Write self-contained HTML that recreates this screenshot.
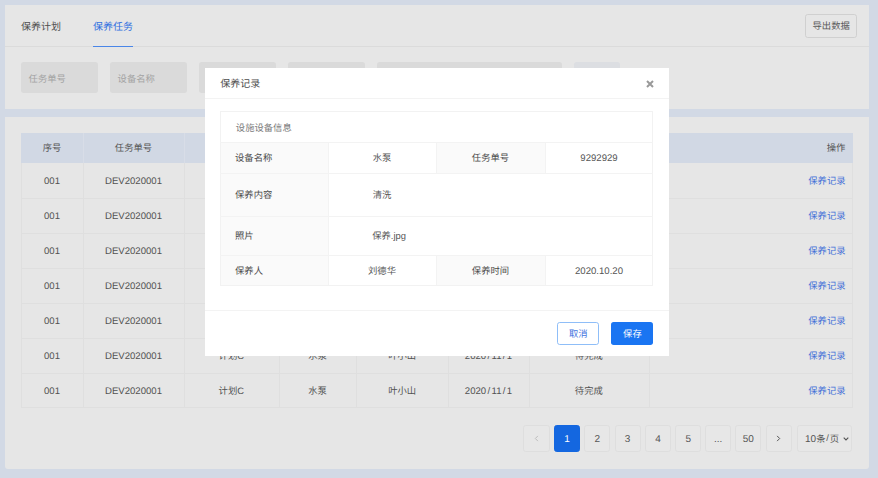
<!DOCTYPE html>
<html lang="zh-CN">
<head>
<meta charset="utf-8">
<title>保养任务</title>
<style>
*{box-sizing:border-box;margin:0;padding:0}
html,body{width:878px;height:478px;overflow:hidden}
body{background:#d2d9e5;font-family:"Liberation Sans","Noto Sans CJK SC",sans-serif;font-size:9.33px;color:#525252;position:relative;text-rendering:geometricPrecision}
.abs{position:absolute}
.c{display:flex;align-items:center;justify-content:center;white-space:nowrap;padding-bottom:2px}
.l{display:flex;align-items:center;justify-content:flex-start;white-space:nowrap;padding-bottom:2px}
.r{display:flex;align-items:center;justify-content:flex-end;white-space:nowrap;padding-bottom:2px}
.panel{position:absolute;background:#e6e6e6}
#p1{left:5px;top:5px;width:863.8px;height:103.7px}
#p2{left:5px;top:116.5px;width:863.8px;height:352px;border-radius:0 0 3px 3px}
.tab{position:absolute;top:16px;height:20px;font-size:10px}
.tabline{position:absolute;left:5px;top:46px;width:863.8px;height:1px;background:#dbdbdb}
.inp{position:absolute;top:62.2px;height:30.7px;background:#dadada;border-radius:2.7px;color:#a3a3a3;padding-left:7.6px;padding-bottom:0}
.th{position:absolute;top:132.5px;height:30.5px;background:#d1d8e4;color:#555}
.vline{position:absolute;width:1px;background:#dfdfdf;top:132.5px;height:275px}
.hline{position:absolute;left:21px;width:831.6px;height:1px;background:#dfdfdf}
.td{position:absolute;height:35px;color:#525252}
.lnk{color:#3f6fd8}
.en{font-size:9.6px;padding-bottom:0;padding-top:1px}
.pg{position:absolute;top:425px;height:26.6px;width:26.3px;border:1px solid #dedede;border-radius:2.7px;background:#e7e7e7;color:#555;font-size:10px;padding-bottom:0;padding-top:2.8px}
#modal{position:absolute;left:205px;top:68px;width:463.8px;height:288px;background:#fff}
.ml{position:absolute;background:#f3f3f3}
.lab{position:absolute;background:#fafafa;color:#4a4a4a}
.val{position:absolute;color:#555}
.btn{position:absolute;top:253.6px;height:23.4px;width:42px;border-radius:2.7px;padding-bottom:0}
</style>
</head>
<body>
<div class="panel" id="p1"></div>
<div class="panel" id="p2"></div>
<div class="tab l" style="left:21px;color:#4d4d4d">保养计划</div>
<div class="tab l" style="left:93px;color:#2f6fe0">保养任务</div>
<div class="tabline"></div>
<div class="abs" style="left:93px;top:45.6px;width:40px;height:1.4px;background:#4a86e8"></div>
<div class="abs c" style="left:805px;top:14px;width:52.3px;height:23.6px;border:1px solid #d0d0d0;border-radius:2.7px;color:#5a5a5a">导出数据</div>
<div class="inp l" style="left:21px;width:77.2px">任务单号</div>
<div class="inp l" style="left:110px;width:77.2px">设备名称</div>
<div class="inp l" style="left:199px;width:77.2px">保养计划</div>
<div class="inp l" style="left:288px;width:77.2px">状态</div>
<div class="inp l" style="left:376.7px;width:185.4px">开始日期</div>
<div class="abs c" style="left:574.3px;top:62.2px;width:46px;height:30.7px;background:#dcdee2;border-radius:2.7px;color:#fff">查询</div>
<div class="th" style="left:21px;width:831.6px"></div>
<div class="th c" style="left:21px;width:62.0px">序号</div>
<div class="th c" style="left:83px;width:101.0px">任务单号</div>
<div class="th c" style="left:184px;width:94.6px">保养计划</div>
<div class="th c" style="left:278.6px;width:77.8px">设备名称</div>
<div class="th c" style="left:356.4px;width:91.6px">保养人</div>
<div class="th c" style="left:448px;width:81.0px">计划时间</div>
<div class="th c" style="left:529px;width:119.6px">状态</div>
<div class="th r" style="left:648.6px;width:204.0px;padding-right:7.2px">操作</div>
<div class="td c en" style="left:21px;top:163px;width:62.0px">001</div>
<div class="td c en" style="left:83px;top:163px;width:101.0px">DEV2020001</div>
<div class="td c" style="left:184px;top:163px;width:94.6px">计划C</div>
<div class="td c" style="left:278.6px;top:163px;width:77.8px">水泵</div>
<div class="td c" style="left:356.4px;top:163px;width:91.6px">叶小山</div>
<div class="td c en" style="left:448px;top:163px;width:81.0px">2020<span style="margin:0 1.35px">/</span>11<span style="margin:0 1.35px">/</span>1</div>
<div class="td c" style="left:529px;top:163px;width:119.6px">待完成</div>
<div class="td r lnk" style="left:648.6px;top:163px;width:204.0px;padding-right:7px">保养记录</div>
<div class="td c en" style="left:21px;top:198.2px;width:62.0px">001</div>
<div class="td c en" style="left:83px;top:198.2px;width:101.0px">DEV2020001</div>
<div class="td c" style="left:184px;top:198.2px;width:94.6px">计划C</div>
<div class="td c" style="left:278.6px;top:198.2px;width:77.8px">水泵</div>
<div class="td c" style="left:356.4px;top:198.2px;width:91.6px">叶小山</div>
<div class="td c en" style="left:448px;top:198.2px;width:81.0px">2020<span style="margin:0 1.35px">/</span>11<span style="margin:0 1.35px">/</span>1</div>
<div class="td c" style="left:529px;top:198.2px;width:119.6px">待完成</div>
<div class="td r lnk" style="left:648.6px;top:198.2px;width:204.0px;padding-right:7px">保养记录</div>
<div class="td c en" style="left:21px;top:233.2px;width:62.0px">001</div>
<div class="td c en" style="left:83px;top:233.2px;width:101.0px">DEV2020001</div>
<div class="td c" style="left:184px;top:233.2px;width:94.6px">计划C</div>
<div class="td c" style="left:278.6px;top:233.2px;width:77.8px">水泵</div>
<div class="td c" style="left:356.4px;top:233.2px;width:91.6px">叶小山</div>
<div class="td c en" style="left:448px;top:233.2px;width:81.0px">2020<span style="margin:0 1.35px">/</span>11<span style="margin:0 1.35px">/</span>1</div>
<div class="td c" style="left:529px;top:233.2px;width:119.6px">待完成</div>
<div class="td r lnk" style="left:648.6px;top:233.2px;width:204.0px;padding-right:7px">保养记录</div>
<div class="td c en" style="left:21px;top:268.2px;width:62.0px">001</div>
<div class="td c en" style="left:83px;top:268.2px;width:101.0px">DEV2020001</div>
<div class="td c" style="left:184px;top:268.2px;width:94.6px">计划C</div>
<div class="td c" style="left:278.6px;top:268.2px;width:77.8px">水泵</div>
<div class="td c" style="left:356.4px;top:268.2px;width:91.6px">叶小山</div>
<div class="td c en" style="left:448px;top:268.2px;width:81.0px">2020<span style="margin:0 1.35px">/</span>11<span style="margin:0 1.35px">/</span>1</div>
<div class="td c" style="left:529px;top:268.2px;width:119.6px">待完成</div>
<div class="td r lnk" style="left:648.6px;top:268.2px;width:204.0px;padding-right:7px">保养记录</div>
<div class="td c en" style="left:21px;top:303.2px;width:62.0px">001</div>
<div class="td c en" style="left:83px;top:303.2px;width:101.0px">DEV2020001</div>
<div class="td c" style="left:184px;top:303.2px;width:94.6px">计划C</div>
<div class="td c" style="left:278.6px;top:303.2px;width:77.8px">水泵</div>
<div class="td c" style="left:356.4px;top:303.2px;width:91.6px">叶小山</div>
<div class="td c en" style="left:448px;top:303.2px;width:81.0px">2020<span style="margin:0 1.35px">/</span>11<span style="margin:0 1.35px">/</span>1</div>
<div class="td c" style="left:529px;top:303.2px;width:119.6px">待完成</div>
<div class="td r lnk" style="left:648.6px;top:303.2px;width:204.0px;padding-right:7px">保养记录</div>
<div class="td c en" style="left:21px;top:338.2px;width:62.0px">001</div>
<div class="td c en" style="left:83px;top:338.2px;width:101.0px">DEV2020001</div>
<div class="td c" style="left:184px;top:338.2px;width:94.6px">计划C</div>
<div class="td c" style="left:278.6px;top:338.2px;width:77.8px">水泵</div>
<div class="td c" style="left:356.4px;top:338.2px;width:91.6px">叶小山</div>
<div class="td c en" style="left:448px;top:338.2px;width:81.0px">2020<span style="margin:0 1.35px">/</span>11<span style="margin:0 1.35px">/</span>1</div>
<div class="td c" style="left:529px;top:338.2px;width:119.6px">待完成</div>
<div class="td r lnk" style="left:648.6px;top:338.2px;width:204.0px;padding-right:7px">保养记录</div>
<div class="td c en" style="left:21px;top:373.2px;width:62.0px">001</div>
<div class="td c en" style="left:83px;top:373.2px;width:101.0px">DEV2020001</div>
<div class="td c" style="left:184px;top:373.2px;width:94.6px">计划C</div>
<div class="td c" style="left:278.6px;top:373.2px;width:77.8px">水泵</div>
<div class="td c" style="left:356.4px;top:373.2px;width:91.6px">叶小山</div>
<div class="td c en" style="left:448px;top:373.2px;width:81.0px">2020<span style="margin:0 1.35px">/</span>11<span style="margin:0 1.35px">/</span>1</div>
<div class="td c" style="left:529px;top:373.2px;width:119.6px">待完成</div>
<div class="td r lnk" style="left:648.6px;top:373.2px;width:204.0px;padding-right:7px">保养记录</div>
<div class="hline" style="top:198.2px"></div>
<div class="hline" style="top:233.2px"></div>
<div class="hline" style="top:268.2px"></div>
<div class="hline" style="top:303.2px"></div>
<div class="hline" style="top:338.2px"></div>
<div class="hline" style="top:373.2px"></div>
<div class="hline" style="top:407.3px"></div>
<div class="vline" style="left:21px;top:163px;height:244.5px"></div>
<div class="vline" style="left:852px;top:163px;height:244.5px"></div>
<div class="vline" style="left:83px;top:163px;height:244.5px"></div>
<div class="vline" style="left:83px;top:132.5px;height:30.5px;background:#d8dde7"></div>
<div class="vline" style="left:184px;top:163px;height:244.5px"></div>
<div class="vline" style="left:184px;top:132.5px;height:30.5px;background:#d8dde7"></div>
<div class="vline" style="left:278.6px;top:163px;height:244.5px"></div>
<div class="vline" style="left:278.6px;top:132.5px;height:30.5px;background:#d8dde7"></div>
<div class="vline" style="left:356.4px;top:163px;height:244.5px"></div>
<div class="vline" style="left:356.4px;top:132.5px;height:30.5px;background:#d8dde7"></div>
<div class="vline" style="left:448px;top:163px;height:244.5px"></div>
<div class="vline" style="left:448px;top:132.5px;height:30.5px;background:#d8dde7"></div>
<div class="vline" style="left:529px;top:163px;height:244.5px"></div>
<div class="vline" style="left:529px;top:132.5px;height:30.5px;background:#d8dde7"></div>
<div class="vline" style="left:648.6px;top:163px;height:244.5px"></div>
<div class="vline" style="left:648.6px;top:132.5px;height:30.5px;background:#d8dde7"></div>
<div class="pg c" style="left:523.4px;padding-top:0"><svg width="5" height="7" viewBox="0 0 5 7"><path d="M3.9 0.9 L1.3 3.5 L3.9 6.1" fill="none" stroke="#bdbdbd" stroke-width="1"/></svg></div>
<div class="pg c" style="left:553.9px;background:#1467e0;border-color:#1467e0;color:#fff">1</div>
<div class="pg c" style="left:584.2px">2</div>
<div class="pg c" style="left:614.5px">3</div>
<div class="pg c" style="left:644.8px">4</div>
<div class="pg c" style="left:675.1px">5</div>
<div class="pg c" style="left:705.0px">...</div>
<div class="pg c" style="left:735.2px">50</div>
<div class="pg c" style="left:765.5px;padding-top:0"><svg width="5" height="7" viewBox="0 0 5 7"><path d="M1.1 0.9 L3.7 3.5 L1.1 6.1" fill="none" stroke="#555" stroke-width="1"/></svg></div>
<div class="pg c" style="left:797.3px;width:54.5px;font-size:9.33px;padding-top:0;padding-left:4.6px"><span style="font-size:10px;position:relative;top:1px">10</span>条<span style="margin:0 0.9px">/</span>页<svg width="6" height="4" viewBox="0 0 6 4" style="margin-left:3.5px;margin-top:1px"><path d="M0.7 0.6 L3 2.9 L5.3 0.6" fill="none" stroke="#555" stroke-width="1.1"/></svg></div>
<div id="modal">
<div class="abs l" style="left:15.3px;top:5.4px;height:20px;font-size:10px;color:#4d4d4d">保养记录</div>
<svg class="abs" style="left:440.8px;top:11.6px" width="8" height="8" viewBox="0 0 8 8"><path d="M1 1 L7 7 M7 1 L1 7" stroke="#999" stroke-width="2" fill="none"/></svg>
<div class="ml" style="left:0;top:30px;width:464px;height:1px"></div>
<div class="abs" style="left:15px;top:43px;width:433.0px;height:175px;border:1px solid #f2f2f2"></div>
<div class="abs l" style="left:30.8px;top:43px;height:32px;padding-bottom:0;color:#7a7a7a">设施设备信息</div>
<div class="lab l" style="left:16.0px;top:74.0px;width:107.0px;height:31.0px;padding-left:14px">设备名称</div>
<div class="lab l" style="left:16.0px;top:105.0px;width:107.0px;height:43.0px;padding-left:14px">保养内容</div>
<div class="lab l" style="left:16.0px;top:148.0px;width:107.0px;height:39.0px;padding-left:14px">照片</div>
<div class="lab l" style="left:16.0px;top:187.0px;width:107.0px;height:30.0px;padding-left:14px;padding-bottom:0">保养人</div>
<div class="lab c" style="left:231.0px;top:74.0px;width:109.0px;height:31.0px;">任务单号</div>
<div class="lab c" style="left:231.0px;top:187.0px;width:109.0px;height:30.0px;padding-bottom:0">保养时间</div>
<div class="val c" style="left:123.0px;top:74.0px;width:108.0px;height:31.0px;">水泵</div>
<div class="val c en" style="left:340.0px;top:74.0px;width:108.0px;height:31.0px;">9292929</div>
<div class="val c" style="left:123.0px;top:105.0px;width:108.0px;height:43.0px;">清洗</div>
<div class="val l" style="left:123.0px;top:148.0px;width:325.0px;height:39.0px;padding-left:44.2px">保养.jpg</div>
<div class="val c" style="left:123.0px;top:187.0px;width:108.0px;height:30.0px;padding-bottom:0">刘德华</div>
<div class="val c en" style="left:340.0px;top:187.0px;width:108.0px;height:30.0px;padding-top:3px">2020.10.20</div>
<div class="ml" style="left:15px;top:74.0px;width:433.0px;height:1px"></div>
<div class="ml" style="left:15px;top:105.0px;width:433.0px;height:1px"></div>
<div class="ml" style="left:15px;top:148.0px;width:433.0px;height:1px"></div>
<div class="ml" style="left:15px;top:187.0px;width:433.0px;height:1px"></div>
<div class="ml" style="left:123.0px;top:74.0px;width:1px;height:31.0px"></div>
<div class="ml" style="left:231.0px;top:74.0px;width:1px;height:31.0px"></div>
<div class="ml" style="left:340.0px;top:74.0px;width:1px;height:31.0px"></div>
<div class="ml" style="left:123.0px;top:187.0px;width:1px;height:30.0px"></div>
<div class="ml" style="left:231.0px;top:187.0px;width:1px;height:30.0px"></div>
<div class="ml" style="left:340.0px;top:187.0px;width:1px;height:30.0px"></div>
<div class="ml" style="left:123.0px;top:105.0px;width:1px;height:82.0px"></div>
<div class="ml" style="left:0;top:242.3px;width:464px;height:1px"></div>
<div class="btn c" style="left:352.3px;border:1px solid #8fbef8;color:#3f74e0;background:#fff">取消</div>
<div class="btn c" style="left:406.4px;background:#1a75f2;color:#fff">保存</div>
</div>
</body>
</html>
